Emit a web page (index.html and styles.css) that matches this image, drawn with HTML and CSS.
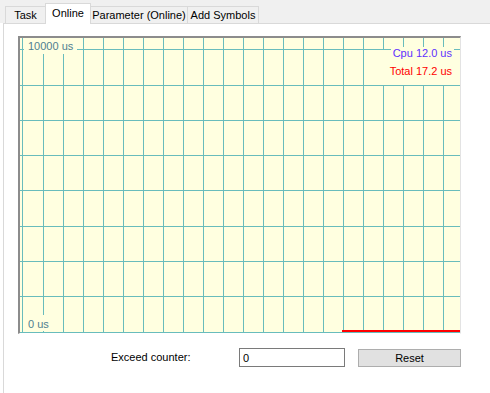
FILE: index.html
```html
<!DOCTYPE html>
<html lang="en">
<head>
    <meta charset="UTF-8">
    <title>Online</title>
    <link rel="stylesheet" href="styles.css">
</head>
<body>
    <div class="tabs">
        <div class="tab tab-task">Task</div>
        <div class="tab tab-online active">Online</div>
        <div class="tab tab-param">Parameter (Online)</div>
        <div class="tab tab-symbols">Add Symbols</div>
    </div>

    <div class="panel">
        <div class="chart">
            <svg class="grid" width="440" height="295" shape-rendering="crispEdges">
                <g fill="#68bcbc">
                    <rect x="2" y="0" width="1" height="295"/>
                    <rect x="23" y="0" width="1" height="295"/>
                    <rect x="43" y="0" width="1" height="295"/>
                    <rect x="63" y="0" width="1" height="295"/>
                    <rect x="83" y="0" width="1" height="295"/>
                    <rect x="103" y="0" width="1" height="295"/>
                    <rect x="123" y="0" width="1" height="295"/>
                    <rect x="143" y="0" width="1" height="295"/>
                    <rect x="163" y="0" width="1" height="295"/>
                    <rect x="183" y="0" width="1" height="295"/>
                    <rect x="203" y="0" width="1" height="295"/>
                    <rect x="223" y="0" width="1" height="295"/>
                    <rect x="243" y="0" width="1" height="295"/>
                    <rect x="263" y="0" width="1" height="295"/>
                    <rect x="283" y="0" width="1" height="295"/>
                    <rect x="303" y="0" width="1" height="295"/>
                    <rect x="323" y="0" width="1" height="295"/>
                    <rect x="343" y="0" width="1" height="295"/>
                    <rect x="363" y="0" width="1" height="295"/>
                    <rect x="383" y="0" width="1" height="295"/>
                    <rect x="403" y="0" width="1" height="295"/>
                    <rect x="423" y="0" width="1" height="295"/>

                    <rect x="0" y="11" width="440" height="1"/>
                    <rect x="0" y="47" width="440" height="1"/>
                    <rect x="0" y="82" width="440" height="1"/>
                    <rect x="0" y="117" width="440" height="1"/>
                    <rect x="0" y="152" width="440" height="1"/>
                    <rect x="0" y="188" width="440" height="1"/>
                    <rect x="0" y="223" width="440" height="1"/>
                    <rect x="0" y="258" width="440" height="1"/>
                    <rect x="0" y="294" width="440" height="1"/>
                </g>
                <rect x="322" y="292" width="118" height="2" fill="#ff0000"/>
            </svg>

            <span class="axis-label axis-max">10000 us</span>
            <span class="axis-label axis-min">0 us</span>

            <div class="readout">
                <span class="cpu">Cpu 12.0 us</span>
                <span class="total">Total 17.2 us</span>
            </div>
        </div>

        <div class="counter-row">
            <label for="exceed" class="counter-label">Exceed counter:</label>
            <input type="text" id="exceed" class="counter-input" value="0">
            <button class="reset-btn">Reset</button>
        </div>
    </div>
</body>
</html>
```

FILE: styles.css
```css
body {
    margin: 0;
    padding: 0;
    background: #ffffff;
    font-family: "Liberation Sans", Arial, sans-serif;
    font-size: 11px;
    color: #000000;
    overflow: hidden;
}

/* tab strip */
.tabs {
    display: flex;
    align-items: flex-end;
    height: 23px;
    padding-left: 5px;
    background: #f0f0f0;
}
.tab {
    box-sizing: border-box;
    height: 17px;
    line-height: 16px;
    text-align: center;
    background: #f0f0f0;
    border: 1px solid #d9d9d9;
    border-bottom: none;
    margin-left: -1px;
    white-space: nowrap;
}
.tab-task { width: 41px; margin-left: 0; }
.tab-online { width: 46px; }
.tab-param { width: 98px; }
.tab-symbols { width: 72px; }
.tab.active {
    position: relative;
    z-index: 1;
    height: 21px;
    padding-top: 1px;
    margin-bottom: -1px;
    background: #ffffff;
}

/* page body */
.panel {
    margin-left: 3px;
    height: 370px;
    border-top: 1px solid #d9d9d9;
    border-left: 1px solid #d9d9d9;
    padding: 12px 0 0 14px;
}

.chart {
    position: relative;
    width: 440px;
    height: 295px;
    background: #ffffe0;
    border-top: 2px solid #8c8c8c;
    border-left: 2px solid #8c8c8c;
    border-right: 1px solid #e3e3e3;
    border-bottom: 1px solid #ffffff;
}
.grid {
    display: block;
}

.axis-label {
    position: absolute;
    left: 4px;
    line-height: 13px;
    background: #ffffe0;
    color: #4f8090;
}
.axis-max {
    top: 0;
    padding: 2px 4px 1px 4px;
}
.axis-min {
    top: 277px;
    padding: 3px 3px 0 4px;
}

.readout {
    position: absolute;
    top: 12px;
    right: 5px;
    display: flex;
    flex-direction: column;
    align-items: flex-end;
    padding: 0 3px 7px 9px;
    background: #ffffe0;
    line-height: 13px;
}
.cpu {
    margin: -3px -2px 0 0;
    padding: 0 2px;
    background: #ffffe0;
    color: #6030ff;
}
.total {
    margin-top: 5px;
    color: #ff0000;
}

/* counter row */
.counter-row {
    display: flex;
    align-items: flex-start;
    margin-top: 14px;
}
.counter-label {
    flex: none;
    width: 128px;
    margin-left: 93px;
    margin-top: 3px;
    line-height: 13px;
}
.counter-input {
    box-sizing: border-box;
    width: 106px;
    height: 19px;
    margin: 0;
    padding: 0 3px;
    border: 1px solid #7a7a7a;
    font-family: "Liberation Sans", Arial, sans-serif;
    font-size: 11px;
    outline: none;
}
.reset-btn {
    box-sizing: border-box;
    width: 103px;
    height: 18px;
    margin: 1px 0 0 13px;
    padding: 0;
    background: #e1e1e1;
    border: 1px solid #adadad;
    font-family: "Liberation Sans", Arial, sans-serif;
    font-size: 11px;
    color: #000000;
}
```
